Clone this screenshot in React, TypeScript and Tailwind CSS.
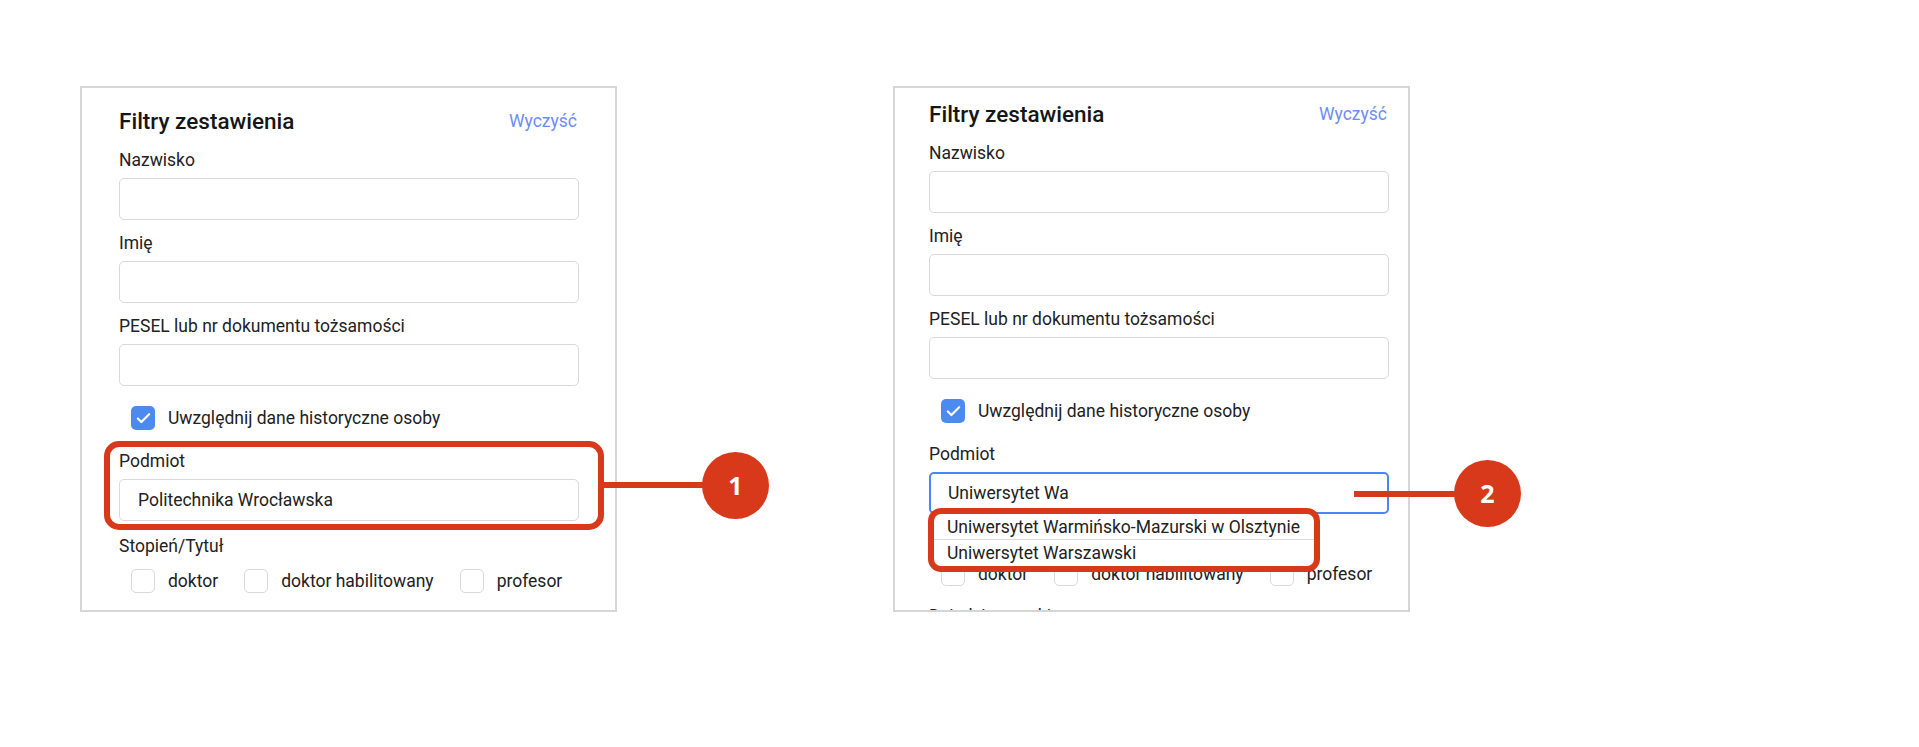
import React from 'react';
import { Check } from 'lucide-react';

const RED = 'border-[#d8391b]';

const Field: React.FC<{ label: string; value?: string; className?: string; focused?: boolean; children?: React.ReactNode }> = ({
  label,
  value,
  className = '',
  focused = false,
  children,
}) => (
  <div className={className}>
    <div className="mb-2 text-[17.5px] leading-[20px] text-[#222]">{label}</div>
    <div className="relative">
      <div
        className={`flex h-[42px] items-center rounded-[5px] bg-white text-[17.5px] text-[#222] ${
          focused ? 'border-2 border-[#4a86f5] pl-[17px]' : 'border border-[#d9d9d9] pl-[18px]'
        }`}
      >
        {value}
      </div>
      {children}
    </div>
  </div>
);

const Box: React.FC<{ checked?: boolean }> = ({ checked = false }) =>
  checked ? (
    <span className="flex h-6 w-6 shrink-0 items-center justify-center rounded-[5px] bg-[#4d8af0]">
      <Check size={17} strokeWidth={3} className="text-white" />
    </span>
  ) : (
    <span className="h-6 w-6 shrink-0 rounded-[5px] border border-[#d9d9d9] bg-white" />
  );

const Option: React.FC<{ label: string; checked?: boolean }> = ({ label, checked }) => (
  <label className="flex h-6 items-center gap-[13px] text-[17.5px] leading-[20px] text-[#222]">
    <Box checked={checked} />
    <span>{label}</span>
  </label>
);

const Degrees: React.FC<{ className?: string }> = ({ className = '' }) => (
  <div className={`ml-[12px] flex items-center gap-[26px] ${className}`}>
    <Option label="doktor" />
    <Option label="doktor habilitowany" />
    <Option label="profesor" />
  </div>
);

const Header: React.FC = () => (
  <div className="flex items-start justify-between">
    <h2 className="text-[22.5px] leading-[28px] font-medium text-[#161616]">Filtry zestawienia</h2>
    <button type="button" className="pr-[2px] text-[17.5px] leading-[28px] text-[#6d8df6]">
      Wyczyść
    </button>
  </div>
);

const Filters: React.FC<{ searching?: boolean }> = ({ searching = false }) => (
  <>
    <Header />
    <Field label="Nazwisko" className="mt-[15px]" />
    <Field label="Imię" className="mt-[13px]" />
    <Field label="PESEL lub nr dokumentu tożsamości" className="mt-[13px]" />
    <div className="mt-[20px] ml-[12px]">
      <Option label="Uwzględnij dane historyczne osoby" checked />
    </div>
    {searching ? (
      <Field label="Podmiot" value="Uniwersytet Wa" focused className="mt-[21px]">
        <div className="absolute top-full left-[4px] z-10 w-[384px] bg-white text-[17.5px] text-[#222]">
          <div className="h-[26px] border-b border-[#dcdcdc] pl-[14px] leading-[26px]">
            Uniwersytet Warmińsko-Mazurski w Olsztynie
          </div>
          <div className="h-[26px] pl-[14px] leading-[26px]">Uniwersytet Warszawski</div>
        </div>
      </Field>
    ) : (
      <Field label="Podmiot" value="Politechnika Wrocławska" className="mt-[21px]" />
    )}
    <div className="mt-[15px] text-[17.5px] leading-[20px] text-[#222]">Stopień/Tytuł</div>
    <Degrees className="mt-[13px]" />
    {searching && <div className="mt-[20px] text-[17.5px] leading-[20px] text-[#222]">Dziedzina nauki</div>}
  </>
);

const Badge: React.FC<{ n: string; className: string }> = ({ n, className }) => (
  <div
    className={`absolute flex h-[67px] w-[67px] items-center justify-center rounded-full bg-[#d8391b] font-['Open_Sans',sans-serif] text-[25px] font-bold text-white ${className}`}
  >
    {n}
  </div>
);

export default function App() {
  return (
    <div className="relative h-[747px] w-[1919px] overflow-hidden bg-white font-['Roboto','Noto_Sans',sans-serif]">
      <div className="flex gap-[276px] pt-[86px] pl-[80px]">
        <section className="h-[526px] w-[537px] shrink-0 border-2 border-[#d6d6d6] bg-white pt-[19px] pr-[36px] pl-[37px]">
          <Filters />
        </section>
        <section className="h-[526px] w-[517px] shrink-0 overflow-hidden border-2 border-[#d6d6d6] bg-white pt-[12px] pr-[19px] pl-[34px]">
          <Filters searching />
        </section>
      </div>

      {/* annotation 1 */}
      <div className={`pointer-events-none absolute top-[441px] left-[104px] h-[89px] w-[500px] rounded-[15px] border-[6px] ${RED}`} />
      <div className="absolute top-[482px] left-[600px] h-[6px] w-[104px] bg-[#d8391b]" />
      <Badge n="1" className="top-[452px] left-[702px]" />

      {/* annotation 2 */}
      <div className={`pointer-events-none absolute top-[508px] left-[928px] z-20 h-[64px] w-[392px] rounded-[13px] border-[6px] ${RED}`} />
      <div className="absolute top-[491px] left-[1354px] z-20 h-[6px] w-[102px] bg-[#d8391b]" />
      <Badge n="2" className="top-[460px] left-[1454px] z-20" />
    </div>
  );
}
